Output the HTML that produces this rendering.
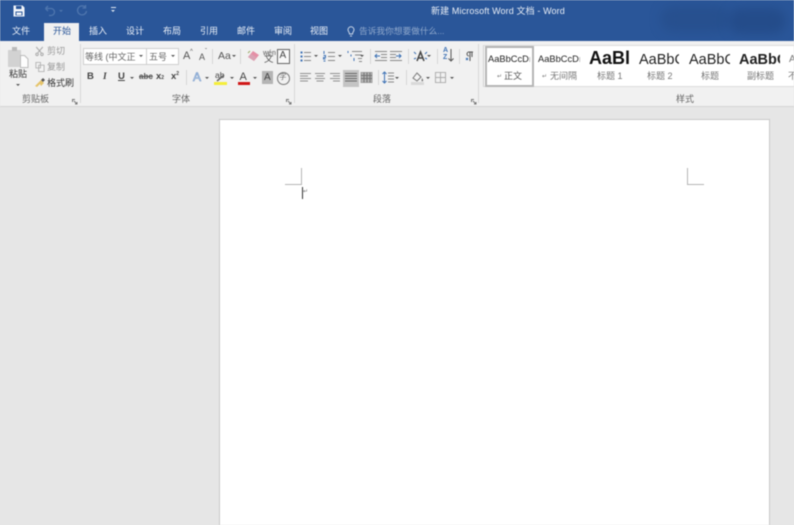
<!DOCTYPE html>
<html lang="zh"><head><meta charset="utf-8"><title>新建 Microsoft Word 文档 - Word</title>
<style>
html,body{margin:0;padding:0}
body{width:794px;height:525px;overflow:hidden;background:#e6e6e6;position:relative;font-family:"Liberation Sans","Noto Sans CJK SC",sans-serif}
#w{position:absolute;left:0;top:0;width:794px;height:525px;overflow:hidden;filter:blur(.45px)}
.b{position:absolute}
.t{position:absolute;white-space:nowrap;line-height:14px;font-size:9px;color:#444}
.tab{color:#e8eef7;top:24px}
.g{color:#777}
.d{position:absolute;width:0;height:0;border-left:2px solid transparent;border-right:2px solid transparent;border-top:2.5px solid #555}
.sep{position:absolute;width:1px;background:#d6d6d6}
.gs{position:absolute;top:44px;height:59px;width:1px;background:#d8d8d8}
.box{position:absolute;background:#fff;border:1px solid #cfcfcf;box-sizing:border-box}
svg{position:absolute;overflow:visible}
.st{position:absolute;white-space:nowrap;color:#222;font-family:"Liberation Sans","Noto Sans CJK SC",sans-serif}
</style></head><body><div id="w">
<!-- title bar -->
<div class="b" style="left:0;top:0;width:794px;height:41px;background:#2a5699"></div>
<div class="b" style="left:660px;top:6px;width:70px;height:26px;border-radius:13px;background:#27508f;filter:blur(5px)"></div>
<div class="b" style="left:728px;top:8px;width:58px;height:26px;border-radius:13px;background:#244c8a;filter:blur(5px)"></div>
<svg style="left:13px;top:5px" width="12" height="12" viewBox="0 0 12 12"><path d="M.5.5h9l2 2v9H.5z" fill="#f2f5fa"/><rect x="3" y="1" width="5.5" height="3" fill="#2a5699"/><rect x="2.5" y="6.5" width="7" height="4" fill="#2a5699"/><rect x="3.5" y="7.5" width="5" height="2.5" fill="#f2f5fa"/></svg>
<svg style="left:44px;top:5px" width="16" height="12" viewBox="0 0 16 12" fill="none" stroke="#4f76ae" stroke-width="1.3"><path d="M1.500 3.500h5.500a3.500 3.500 0 0 1 0 7h-2M1.500 3.500l2.500-2.500M1.500 3.500l2.500 2.500"/></svg>
<div class="d" style="left:59px;top:10px;border-top-color:#4f76ae"></div>
<svg style="left:76px;top:5px" width="12" height="12" viewBox="0 0 12 12" fill="none" stroke="#4f76ae" stroke-width="1.3"><path d="M9.500 2.500A4.500 4.500 0 1 0 10.500 6M9.500 0v3h-3"/></svg>
<div class="b" style="left:111px;top:7px;width:5px;height:1px;background:#dfe7f2"></div>
<div class="d" style="left:111px;top:9.500px;border-top-color:#dfe7f2;border-left-width:2.500px;border-right-width:2.500px"></div>
<div class="t" style="left:431px;top:4px;color:#e9eef6;font-size:9px;letter-spacing:.12px">新建 Microsoft Word 文档 - Word</div>

<!-- tabs -->
<div class="t tab" style="left:12px">文件</div>
<div class="b" style="left:44px;top:23px;width:35px;height:19px;background:#f1f1f1"></div>
<div class="t" style="left:53px;top:24px;color:#2a5699">开始</div>
<div class="t tab" style="left:89px">插入</div>
<div class="t tab" style="left:126px">设计</div>
<div class="t tab" style="left:163px">布局</div>
<div class="t tab" style="left:200px">引用</div>
<div class="t tab" style="left:237px">邮件</div>
<div class="t tab" style="left:274px">审阅</div>
<div class="t tab" style="left:310px">视图</div>
<svg style="left:347px;top:26px" width="8" height="12" viewBox="0 0 8 12" fill="none" stroke="#c9d6e8" stroke-width="1"><path d="M2.500 8C2.500 6 1 5.500 1 3.800a3 3 0 0 1 6 0C7 5.500 5.500 6 5.500 8zM3 10h2"/></svg>
<div class="t" style="left:359px;top:24px;color:#8fa8cc;font-size:8.700px">告诉我你想要做什么...</div>

<!-- ribbon -->
<div class="b" style="left:0;top:41px;width:794px;height:65px;background:#f1f1f1"></div>
<div class="b" style="left:0;top:106px;width:794px;height:1px;background:#d4d4d4"></div>
<div class="gs" style="left:80px"></div><div class="gs" style="left:294px"></div><div class="gs" style="left:478px"></div>

<!-- clipboard -->
<svg style="left:8px;top:47px" width="21" height="21" viewBox="0 0 21 21"><rect x="0" y="3" width="13" height="17" fill="#d2d2d2"/><rect x="4" y="0" width="5" height="4" fill="#bbb"/><path d="M12.500 8.500h4l3.500 3.500v8.500h-7.500z" fill="#fdfdfd" stroke="#bcbcbc"/></svg>
<div class="t" style="left:9px;top:67px;color:#333">粘贴</div><div class="d" style="left:16px;top:84px"></div>
<svg style="left:35px;top:46.500px" width="9" height="9" viewBox="0 0 10 11" fill="none" stroke="#a9a9a9" stroke-width="1.200"><path d="M1 0l6 7M9 0L3 7"/><circle cx="2" cy="9" r="1.500"/><circle cx="8" cy="9" r="1.500"/></svg>
<div class="t g" style="left:47px;top:44px;color:#999">剪切</div>
<svg style="left:35px;top:62px" width="10" height="10" viewBox="0 0 10 11" fill="#f4f4f4" stroke="#b2b2b2"><path d="M.5.500h5v6h-5zM3.500 3.500h6v7h-6z"/></svg>
<div class="t g" style="left:47px;top:60px;color:#999">复制</div>
<svg style="left:34px;top:77px" width="12" height="11" viewBox="0 0 12 11"><path d="M7 3l3 3-3 3-1-2-3 3-2-1 3-3z" fill="#e6c46a"/><path d="M7 3l2-2 2 2-2 2z" fill="#555"/></svg>
<div class="t" style="left:47px;top:76px;color:#333">格式刷</div>
<div class="t g" style="left:22px;top:92px;color:#666">剪贴板</div>
<svg style="left:72px;top:99px" width="6" height="6" viewBox="0 0 6 6" fill="none" stroke="#777"><path d="M.5 3V.500H3M2 2l3 3M5 3v2H3"/></svg>

<!-- font -->
<div class="box" style="left:83px;top:48px;width:64px;height:17px"></div>
<div class="box" style="left:146px;top:48px;width:33px;height:17px"></div>
<div class="t" style="left:85px;top:50px;color:#666;font-size:9px;width:51px;overflow:hidden">等线 (中文正文)</div>
<div class="d" style="left:139px;top:55px"></div>
<div class="t" style="left:149px;top:50px;color:#666">五号</div>
<div class="d" style="left:171px;top:55px"></div>
<div class="t" style="left:183px;top:49px;font-size:11px;color:#555">A</div><div class="t" style="left:190px;top:45px;font-size:6px;color:#555">^</div>
<div class="t" style="left:199px;top:50px;font-size:9px;color:#555">A</div><div class="t" style="left:205px;top:45px;font-size:6px;color:#555">ˇ</div>
<div class="sep" style="left:212px;top:49px;height:15px"></div>
<div class="t" style="left:218px;top:49px;font-size:10.500px;color:#555">Aa</div><div class="d" style="left:232px;top:55px"></div>
<div class="sep" style="left:240px;top:49px;height:15px"></div>
<svg style="left:247px;top:50px" width="13" height="12" viewBox="0 0 13 12"><path d="M1 7l5-6 6 4-5 6z" fill="#e58fa6"/><path d="M1 7l3-3 5 3-2 4z" fill="#d9a3b4"/><path d="M3 1L1 3" stroke="#9a6" fill="none"/></svg>
<div class="t" style="left:263px;top:47px;font-size:7px;color:#555">wén</div>
<div class="t" style="left:264px;top:53px;font-size:9.500px;color:#555">文</div>
<div class="b" style="left:277px;top:49px;width:11px;height:13px;border:1px solid #666;background:#f8f8f8"></div>
<div class="t" style="left:279.500px;top:49px;font-size:10px;color:#444">A</div>

<div class="t" style="left:87px;top:70px;font-size:9.500px;font-weight:bold;color:#444">B</div>
<div class="t" style="left:103px;top:70px;font-size:9.500px;font-style:italic;font-family:'Liberation Serif',serif;font-weight:bold;color:#444">I</div>
<div class="t" style="left:118px;top:70px;font-size:9.500px;font-weight:bold;color:#444;text-decoration:underline">U</div>
<div class="d" style="left:130px;top:77px"></div>
<div class="t" style="left:139px;top:70px;font-size:8px;font-weight:bold;color:#555;text-decoration:line-through">abc</div>
<div class="t" style="left:156px;top:70px;font-size:9.500px;font-weight:bold;color:#444">x<span style="font-size:5px">2</span></div>
<div class="t" style="left:171px;top:70px;font-size:9.500px;font-weight:bold;color:#444">x<sup style="font-size:5px;line-height:0">2</sup></div>
<div class="sep" style="left:186px;top:70px;height:15px"></div>
<div class="t" style="left:193px;top:70px;font-size:12px;color:#e4edf8;-webkit-text-stroke:.6px #6d94c8">A</div><div class="d" style="left:205px;top:77px"></div>
<div class="t" style="left:215px;top:68px;font-size:8.500px;color:#444">ab</div>
<div class="b" style="left:214px;top:82px;width:13px;height:3px;background:#f5ee3a"></div>
<svg style="left:216px;top:74px" width="10" height="8" viewBox="0 0 10 8"><path d="M1 7L8 1" stroke="#666" stroke-width="1.500"/></svg>
<div class="d" style="left:230px;top:77px"></div>
<div class="t" style="left:239.500px;top:70px;font-size:11px;color:#444">A</div>
<div class="b" style="left:238px;top:82px;width:12px;height:3px;background:#d01818"></div>
<div class="d" style="left:253px;top:77px"></div>
<div class="b" style="left:262px;top:71px;width:11px;height:13px;background:#b4b4b4"></div>
<div class="t" style="left:264px;top:71px;font-size:10px;color:#444">A</div>
<div class="b" style="left:276.500px;top:71.500px;width:11px;height:11px;border:1px solid #777;border-radius:50%"></div>
<div class="t" style="left:279px;top:70px;font-size:7.500px;color:#666">字</div>
<div class="t g" style="left:172px;top:92px;color:#666">字体</div>
<svg style="left:286px;top:99px" width="6" height="6" viewBox="0 0 6 6" fill="none" stroke="#777"><path d="M.5 3V.500H3M2 2l3 3M5 3v2H3"/></svg>

<!-- paragraph row 1 -->
<svg style="left:300px;top:50px" width="165" height="13" viewBox="0 0 165 13" fill="none" stroke="#888" stroke-width="1">
<path d="M4 2.500h7M4 6.500h7M4 10.500h7"/><path d="M.5 2.500h2M.5 6.500h2M.5 10.500h2" stroke="#3f73b5" stroke-width="2"/>
<path d="M28 2.500h7M28 6.500h7M28 10.500h7"/><path d="M24 1v3M23.500 5.500h2v2h-2v1.500h2M23.500 11h2" stroke="#3f73b5"/>
<path d="M52 1.500h10M55 5h7M58 8.500h4M59 11.500h3"/><path d="M48 1v2M51 4.500v2M54 8v3" stroke="#3f73b5"/>
<path d="M75 1.500h12M81 4.500h6M81 7.500h6M75 10.500h12"/><path d="M80 6h-5M77 4l-2 2 2 2" stroke="#3f73b5"/>
<path d="M90 1.500h12M90 4.500h6M90 7.500h6M90 10.500h12"/><path d="M96 6h5M99 4l2 2-2 2" stroke="#3f73b5"/>
</svg>
<div class="d" style="left:314px;top:55px"></div><div class="d" style="left:338px;top:55px"></div><div class="d" style="left:360px;top:55px"></div>
<div class="sep" style="left:370px;top:49px;height:15px"></div>
<div class="sep" style="left:408px;top:49px;height:15px"></div>
<svg style="left:413px;top:50px" width="15" height="13" viewBox="0 0 15 13"><path d="M4 11L7.500 2 11 11M5.500 8h4" fill="none" stroke="#444" stroke-width="1.500"/><path d="M1 2l2 2M14 2l-2 2M1 9l2-1M14 9l-2-1" stroke="#3f73b5"/></svg>
<div class="d" style="left:427px;top:55px"></div>
<div class="sep" style="left:437px;top:49px;height:15px"></div>
<div class="t" style="left:443px;top:47px;font-size:7px;line-height:7px;color:#3f73b5;font-weight:bold">A<br>Z</div>
<svg style="left:448px;top:49px" width="6" height="14" viewBox="0 0 6 14" fill="none" stroke="#555"><path d="M3 0v12M.5 9.500L3 12l2.500-2.500"/></svg>
<div class="sep" style="left:459px;top:49px;height:15px"></div>
<svg style="left:465px;top:51px" width="10" height="11" viewBox="0 0 10 11" fill="none" stroke="#555"><path d="M5 1v9M7 1v5M4 5a2 2 0 0 1 0-4h4" /><path d="M1 7l2 2M3 7L1 9" stroke="#3f73b5"/></svg>

<!-- paragraph row 2 -->
<div class="b" style="left:343px;top:70px;width:16px;height:17px;background:#c4c4c4"></div>
<svg style="left:300px;top:72px" width="75" height="11" viewBox="0 0 75 11" fill="none" stroke="#909090" stroke-width="1">
<path d="M0 1.500h11M0 4h8M0 6.500h11M0 9h8"/><path d="M15 1.500h10M16.500 4h7M15 6.500h10M16.500 9h7"/><path d="M30 1.500h10M33 4h7M30 6.500h10M33 9h7"/>
<path d="M45 1.500h12M45 4h12M45 6.500h12M45 9h12" stroke="#666"/>
<path d="M61 .500h11v10H61z" fill="#b3b3b3" stroke="#a0a0a0"/><path d="M61 3.500h11M61 6.500h11M64 .500v10M67 .500v10M70 .500v10" stroke="#777"/>
</svg>
<div class="sep" style="left:378px;top:70px;height:15px"></div>
<svg style="left:382px;top:71px" width="15" height="14" viewBox="0 0 15 14" fill="none"><path d="M6 2h6M6 5h6M6 8h6M6 11h6" stroke="#888"/><path d="M2.500 1v11M.5 3l2-2 2 2M.5 10l2 2 2-2" stroke="#3f73b5"/></svg>
<div class="d" style="left:395px;top:77px"></div>
<div class="sep" style="left:406px;top:70px;height:15px"></div>
<svg style="left:411px;top:71px" width="14" height="14" viewBox="0 0 14 14"><path d="M2 7l4-5 4 4-4 4z" fill="#f4f4f4" stroke="#777"/><path d="M11 7c1 1.500 1.500 2 1 3-.5.700-1.500.4-1.500-.5" fill="#777"/><rect x="0" y="11" width="13" height="3" fill="#d9d9d9"/></svg>
<div class="d" style="left:426px;top:77px"></div>
<svg style="left:435px;top:72px" width="11" height="11" viewBox="0 0 12 12" fill="none" stroke="#aaa"><path d="M.5.500h11v11H.500zM6 .5v11M.5 6h11"/></svg>
<div class="d" style="left:450px;top:77px"></div>
<div class="t g" style="left:373px;top:92px;color:#666">段落</div>
<svg style="left:471px;top:99px" width="6" height="6" viewBox="0 0 6 6" fill="none" stroke="#777"><path d="M.5 3V.500H3M2 2l3 3M5 3v2H3"/></svg>

<!-- styles -->
<div class="b" style="left:483px;top:45px;width:311px;height:42px;background:#fff;border-top:1px solid #dcdcdc;border-bottom:1px solid #dcdcdc;border-left:1px solid #d0d0d0;box-sizing:border-box"></div>
<div class="b" style="left:485px;top:46px;width:49px;height:41px;border:2px solid #b5b5b5;box-sizing:border-box"></div>
<div class="st" style="left:488px;top:53px;width:42px;overflow:hidden;font-size:9.300px;line-height:13px">AaBbCcDı</div>
<div class="t" style="left:497px;top:70px;color:#777;font-size:6px">↵</div><div class="t" style="left:504px;top:69px;color:#555">正文</div>
<div class="st" style="left:538px;top:53px;width:42px;overflow:hidden;font-size:9.300px;line-height:13px">AaBbCcDı</div>
<div class="t" style="left:542px;top:70px;color:#777;font-size:6px">↵</div><div class="t" style="left:550px;top:69px;color:#777">无间隔</div>
<div class="st" style="left:589px;top:47px;width:41px;overflow:hidden;font-size:18px;line-height:22px;font-weight:bold;color:#111">AaBl</div>
<div class="t" style="left:597px;top:69px;color:#777">标题 1</div>
<div class="st" style="left:639px;top:51px;width:40px;overflow:hidden;font-size:14.500px;line-height:18px">AaBbC</div>
<div class="t" style="left:647px;top:69px;color:#777">标题 2</div>
<div class="st" style="left:689px;top:51px;width:41px;overflow:hidden;font-size:14.500px;line-height:18px">AaBbC</div>
<div class="t" style="left:701px;top:69px;color:#777">标题</div>
<div class="st" style="left:739px;top:51px;width:41px;overflow:hidden;font-size:14.500px;line-height:18px;font-weight:bold">AaBbC</div>
<div class="t" style="left:747px;top:69px;color:#777">副标题</div>
<div class="t" style="left:788px;top:69px;color:#777">不</div>
<div class="st" style="left:789px;top:53px;font-size:10px;line-height:13px;color:#777">A</div>
<div class="t g" style="left:676px;top:92px;color:#666">样式</div>

<!-- document -->
<div class="b" style="left:219px;top:119px;width:551px;height:420px;background:#fff;border:1px solid #c9c9c9;box-sizing:border-box"></div>
<div class="b" style="left:285px;top:184px;width:16px;height:1px;background:#b5b5b5"></div>
<div class="b" style="left:301px;top:168px;width:1px;height:17px;background:#b5b5b5"></div>
<div class="b" style="left:687px;top:168px;width:1px;height:17px;background:#b5b5b5"></div>
<div class="b" style="left:687px;top:184px;width:17px;height:1px;background:#b5b5b5"></div>
<div class="b" style="left:302px;top:187px;width:1px;height:12px;background:#333"></div>
<div class="t" style="left:303px;top:187px;font-size:6px;line-height:10px;color:#777">↵</div>
</div></body></html>
